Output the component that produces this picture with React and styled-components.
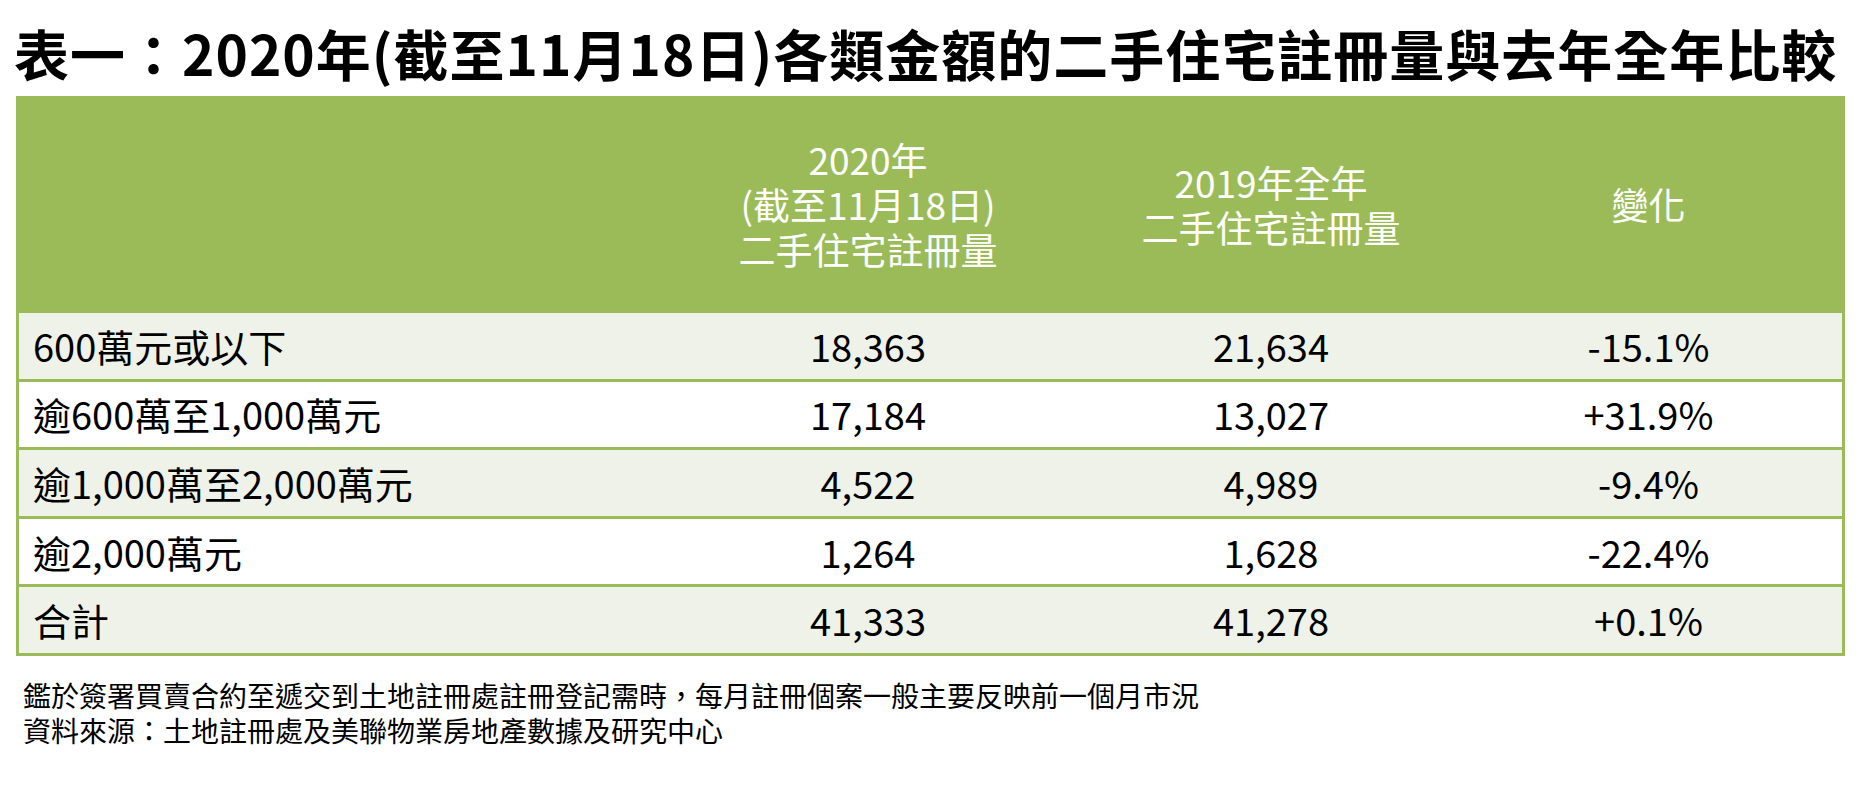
import styled, { createGlobalStyle } from "styled-components";

const GlobalStyle = createGlobalStyle`
  body {
    margin: 0;
    background: #ffffff;
    font-family: "Noto Sans CJK TC", "Noto Sans", sans-serif;
    color: #000000;
  }
`;

const green = "#9bbb59";

const Page = styled.div`
  width: 1876px;
  height: 798px;
  background: #ffffff;
  overflow: hidden;
`;

const Title = styled.h1`
  margin: 0;
  padding: 22px 0 14px 14px;
  font-size: 55px;
  line-height: 60px;
  font-weight: 700;
  letter-spacing: 1px;
  white-space: nowrap;
`;

const Table = styled.div`
  margin-left: 16px;
  width: 1829px;
  box-sizing: border-box;
  border-left: 3px solid ${green};
  border-right: 3px solid ${green};
`;

const Row = styled.div`
  display: grid;
  grid-template-columns: 630px 438px 368px 1fr;
  height: ${(p) => (p.$head ? "217px" : "65.6px")};
  background: ${(p) => (p.$head ? green : p.$shade ? "#eef2e8" : "#ffffff")};
  border-bottom: ${(p) => (p.$head ? "none" : `3px solid ${green}`)};
`;

const Cell = styled.div`
  display: flex;
  align-items: center;
  justify-content: ${(p) => (p.$left ? "flex-start" : "center")};
  padding-left: ${(p) => (p.$left ? "14px" : "0")};
  font-size: 38px;
  line-height: 1;
  white-space: nowrap;
`;

const HeadCell = styled.div`
  display: flex;
  align-items: center;
  justify-content: center;
  text-align: center;
  color: #ffffff;
  font-size: 37px;
  line-height: 45px;
  white-space: pre-line;
`;

const Notes = styled.div`
  padding: 22px 0 0 23px;
  font-size: 28px;
  line-height: 35px;
`;

const rows = [
  ["600萬元或以下", "18,363", "21,634", "-15.1%"],
  ["逾600萬至1,000萬元", "17,184", "13,027", "+31.9%"],
  ["逾1,000萬至2,000萬元", "4,522", "4,989", "-9.4%"],
  ["逾2,000萬元", "1,264", "1,628", "-22.4%"],
  ["合計", "41,333", "41,278", "+0.1%"],
];

export default function App() {
  return (
    <Page>
      <GlobalStyle />
      <Title>表一：2020年(截至11月18日)各類金額的二手住宅註冊量與去年全年比較</Title>
      <Table>
        <Row $head>
          <HeadCell />
          <HeadCell>{"2020年\n(截至11月18日)\n二手住宅註冊量"}</HeadCell>
          <HeadCell>{"2019年全年\n二手住宅註冊量"}</HeadCell>
          <HeadCell>變化</HeadCell>
        </Row>
        {rows.map((r, i) => (
          <Row key={r[0]} $shade={i % 2 === 0}>
            <Cell $left>{r[0]}</Cell>
            <Cell>{r[1]}</Cell>
            <Cell>{r[2]}</Cell>
            <Cell>{r[3]}</Cell>
          </Row>
        ))}
      </Table>
      <Notes>
        <div>鑑於簽署買賣合約至遞交到土地註冊處註冊登記需時，每月註冊個案一般主要反映前一個月市況</div>
        <div>資料來源：土地註冊處及美聯物業房地產數據及研究中心</div>
      </Notes>
    </Page>
  );
}
